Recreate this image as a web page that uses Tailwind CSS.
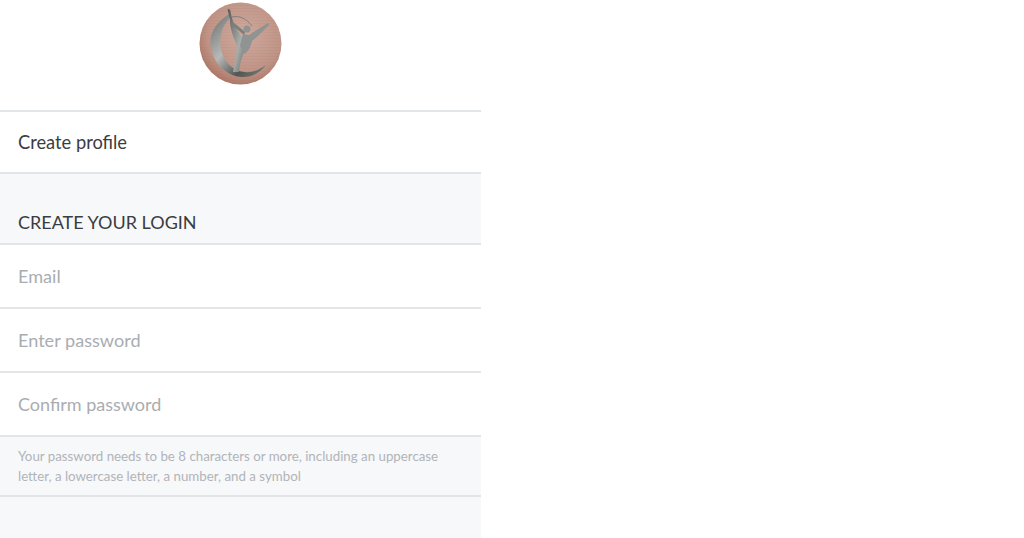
<!DOCTYPE html>
<html lang="en">
<head>
    <meta charset="UTF-8">
    <meta name="viewport" content="width=device-width, initial-scale=1.0">
    <title>Create profile</title>
    <script src="https://cdn.jsdelivr.net/npm/@tailwindcss/browser@4"></script>
</head>
<body class="h-[538px] overflow-hidden bg-white font-['Lato','Open_Sans',sans-serif]">
    <div class="w-[481px] h-[538px] flex flex-col bg-[#f7f8fa]">
        <div class="h-[112px] shrink-0 bg-white border-b-2 border-[#e3e6e8] flex justify-center pt-[2px]">
            <svg class="w-[83px] h-[83px]" viewBox="0 0 83 83">
                <defs>
                    <radialGradient id="copper" cx="0.55" cy="0.4" r="0.65">
                        <stop offset="0" stop-color="#cfaa9e"/>
                        <stop offset="0.7" stop-color="#bf9486"/>
                        <stop offset="1" stop-color="#a9705f"/>
                    </radialGradient>
                    <pattern id="brushed" width="4" height="3" patternUnits="userSpaceOnUse">
                        <rect width="4" height="1" fill="#8a5245" opacity="0.05"/>
                    </pattern>
                    <linearGradient id="silver" x1="0" y1="0" x2="1" y2="1">
                        <stop offset="0" stop-color="#555956"/>
                        <stop offset="0.6" stop-color="#a9adab"/>
                        <stop offset="1" stop-color="#626663"/>
                    </linearGradient>
                    <linearGradient id="moon" x1="0" y1="0" x2="1" y2="1">
                        <stop offset="0" stop-color="#6a6e6b"/>
                        <stop offset="0.42" stop-color="#b6b9b7"/>
                        <stop offset="0.72" stop-color="#525653"/>
                        <stop offset="1" stop-color="#7f8380"/>
                    </linearGradient>
                </defs>
                <circle cx="41.5" cy="41.5" r="41" fill="url(#copper)"/>
                <circle cx="41.5" cy="41.5" r="41" fill="url(#brushed)"/>
                <path d="M30 12 C18 20 10.5 30 11.5 42 C13 61 28 74.5 43 75 C53 75.5 61 70.5 67 63 C60 68 53 71 46 70 C33 69 23 58 21.5 44 C20.5 33 24 22 32 15 Z" fill="url(#moon)"/>
                <path d="M33 15 C40 13 48 17 53 24" fill="none" stroke="#857f7a" stroke-width="1"/>
                <path d="M28.5 7 L31 7.5 L33 16 C35 24 39 30 45 38 L47 44 C45 52 41 58 40 70 L34 70 C36 60 37 52 38 44 C35 36 31 28 31 18 Z" fill="url(#silver)"/>
                <path d="M44 32 L50 33 L69 21 L70.5 22.5 L59 34 L53 39 C52 44 50 48 46 52 L41 44 Z" fill="#8f9391"/>
                <path d="M34 20 L46 30 L45 33 L33 23 Z" fill="#7b7f7d"/>
                <circle cx="48" cy="27" r="3.5" fill="#8f9391"/>
            </svg>
        </div>
        <div class="h-[62px] shrink-0 bg-white border-b-2 border-[#e3e6e8] flex items-center px-[18px] pt-[2px] text-[18.3px] text-[#3a3d40]">Create profile</div>
        <div class="h-[71px] shrink-0 border-b-2 border-[#e3e6e8] flex items-end px-[18px] pb-[10px] text-[18px] leading-[22px] text-[#3a3d40]">CREATE YOUR LOGIN</div>
        <div class="h-[64px] shrink-0 bg-white border-b-2 border-[#e3e6e8] flex items-center px-[18px] pt-[2px] text-[18.1px] text-[#a9adb1]">Email</div>
        <div class="h-[64px] shrink-0 bg-white border-b-2 border-[#e3e6e8] flex items-center px-[18px] pt-[2px] text-[18.1px] text-[#a9adb1]">Enter password</div>
        <div class="h-[64px] shrink-0 bg-white border-b-2 border-[#e3e6e8] flex items-center px-[18px] text-[18px] text-[#a9adb1]">Confirm password</div>
        <div class="h-[60px] shrink-0 border-b-2 border-[#e3e6e8] px-[18px] pt-[9px] text-[13.3px] leading-[20px] text-[#b1b4b8]">Your password needs to be 8 characters or more, including an uppercase letter, a lowercase letter, a number, and a symbol</div>
    </div>
</body>
</html>
